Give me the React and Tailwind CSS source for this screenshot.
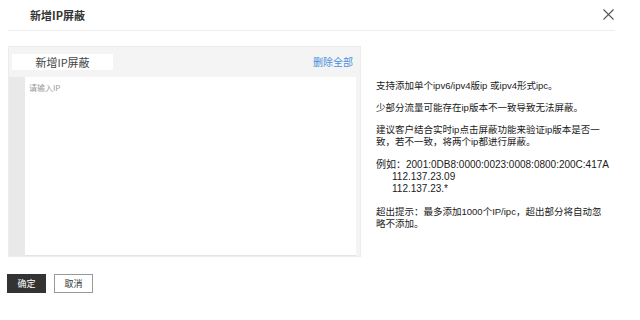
import React from 'react'

const font = { fontFamily: '"Noto Sans CJK SC", "Liberation Sans", sans-serif' }
const noteFont = { fontFamily: '"Liberation Sans", "Noto Sans CJK SC", sans-serif' }

function CloseIcon() {
  return (
    <svg width="11" height="11" viewBox="0 0 11 11" className="text-[#555]">
      <path d="M0.5 0.5 L10.5 10.5 M10.5 0.5 L0.5 10.5" stroke="currentColor" strokeWidth="1.1" fill="none" />
    </svg>
  )
}

export default function App() {
  return (
    <div className="w-[640px] h-[320px] bg-white overflow-hidden text-[#333]" style={font}>
      {/* 标题栏 */}
      <div className="ml-2 w-[607px] h-[31px] flex items-center justify-between border-b border-[#eeeeee]">
        <span className="pl-[22px] text-[11px] font-bold text-[#333] leading-none">新增IP屏蔽</span>
        <span className="pr-px pb-[2px]"><CloseIcon /></span>
      </div>

      <div className="flex mt-[15px] ml-2">
        {/* 左侧输入面板 */}
        <div className="w-[353px] h-[211px] bg-[#f4f4f4] border border-[#ececec] flex flex-col">
          <div className="h-[30px] flex items-center justify-between pl-[3px] pr-[7px]">
            <div className="w-[101px] h-[16px] bg-white flex items-center justify-center text-[11px] text-[#444] leading-none">
              新增IP屏蔽
            </div>
            <span className="text-[10px] text-[#4a90e2] leading-none">删除全部</span>
          </div>
          <div className="flex-1 flex mr-[4px]">
            <div className="w-[16px] bg-[#e9e9e9]" />
            <div className="flex-1 bg-white border-b border-[#e4e4e4] pt-[6px] pl-[4px] text-[8px] leading-[10px] text-[#999]">
              请输入IP
            </div>
          </div>
        </div>

        {/* 右侧说明 */}
        <div className="ml-[15px] pt-[34px] text-[9.5px] leading-[12px] text-[#1a1a1a] whitespace-nowrap" style={noteFont}>
          <p className="mb-[10px]">支持添加单个ipv6/ipv4版ip 或ipv4形式ipc。</p>
          <p className="mb-[10px]">少部分流量可能存在ip版本不一致导致无法屏蔽。</p>
          <p className="mb-[11px]">
            建议客户结合实时ip点击屏蔽功能来验证ip版本是否一<br />
            致，若不一致，将两个ip都进行屏蔽。
          </p>
          <div className="mb-[11px] text-[10px]">
            <p>例如：2001:0DB8:0000:0023:0008:0800:200C:417A</p>
            <p className="pl-[16px]">112.137.23.09</p>
            <p className="pl-[16px]">112.137.23.*</p>
          </div>
          <p>
            超出提示：最多添加1000个IP/ipc，超出部分将自动忽<br />
            略不添加。
          </p>
        </div>
      </div>

      {/* 按钮 */}
      <div className="flex gap-[8px] ml-[7px] mt-[17px]">
        <button className="w-[39px] h-[19px] bg-[#333] text-white text-[9px] leading-none flex items-center justify-center">
          确定
        </button>
        <button className="w-[39px] h-[19px] bg-white border border-[#999] text-[#333] text-[9px] leading-none flex items-center justify-center">
          取消
        </button>
      </div>
    </div>
  )
}
